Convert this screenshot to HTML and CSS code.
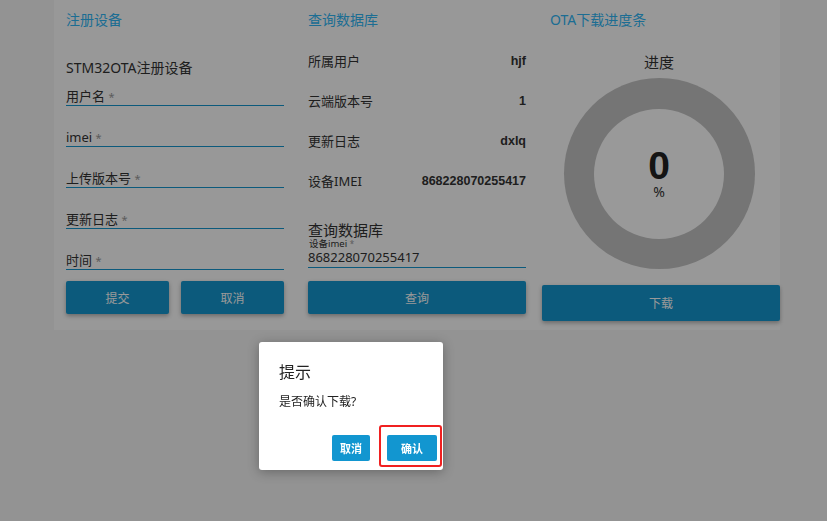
FILE: index.html
```html
<!DOCTYPE html>
<html lang="zh-CN">
<head>
    <meta charset="UTF-8">
    <meta name="viewport" content="width=device-width, initial-scale=1.0">
    <title>STM32 OTA</title>
    <link rel="stylesheet" href="styles.css">
</head>
<body>

    <div class="cards">

        <!-- 注册设备 -->
        <div class="card">
            <div class="card-title">注册设备</div>
            <div class="sub-title">STM32OTA注册设备</div>
            <div class="field"><label>用户名 <i>*</i></label></div>
            <div class="field"><label>imei <i>*</i></label></div>
            <div class="field"><label>上传版本号 <i>*</i></label></div>
            <div class="field"><label>更新日志 <i>*</i></label></div>
            <div class="field"><label>时间 <i>*</i></label></div>
            <div class="btn-row">
                <button class="btn">提交</button>
                <button class="btn">取消</button>
            </div>
        </div>

        <!-- 查询数据库 -->
        <div class="card">
            <div class="card-title">查询数据库</div>
            <div class="info-row"><span>所属用户</span><b>hjf</b></div>
            <div class="info-row"><span>云端版本号</span><b>1</b></div>
            <div class="info-row"><span>更新日志</span><b>dxlq</b></div>
            <div class="info-row"><span>设备IMEI</span><b>868228070255417</b></div>
            <div class="query-title">查询数据库</div>
            <div class="query-field">
                <div class="small-label">设备imei <i>*</i></div>
                <div class="query-value">868228070255417</div>
            </div>
            <button class="btn btn-full">查询</button>
        </div>

        <!-- OTA下载进度条 -->
        <div class="card">
            <div class="card-title">OTA下载进度条</div>
            <div class="progress-title">进度</div>
            <div class="donut">
                <div class="donut-inner">
                    <div class="percent">0</div>
                    <div class="percent-sign">%</div>
                </div>
            </div>
            <button class="btn btn-wide">下载</button>
        </div>

    </div>

    <div class="mask"></div>

    <div class="dialog">
        <div class="dialog-title">提示</div>
        <div class="dialog-msg">是否确认下载?</div>
        <div class="dialog-footer">
            <button class="dlg-btn">取消</button>
            <button class="dlg-btn dlg-ok">确认</button>
        </div>
        <div class="mark"></div>
    </div>

</body>
</html>
```

FILE: styles.css
```css
/* base */
body {
    margin: 0;
    background-color: #f6f6f6;
    font-family: "Noto Sans", "Noto Sans CJK SC", sans-serif;
    color: #333333;
    height: 521px;
    overflow: hidden;
}

.cards {
    display: flex;
    align-items: stretch;
    padding-left: 54px;
}

.card {
    width: 242px;
    box-sizing: border-box;
    padding: 10px 12px 9px 12px;
    background-color: #fdfdfd;
    display: flex;
    flex-direction: column;
}

.card-title {
    font-size: 14px;
    line-height: 20px;
    color: #2fb6f5;
}

.sub-title {
    margin-top: 31px;
    font-size: 14px;
    line-height: 14px;
    color: #333;
}

/* formulario */
.field {
    height: 31px;
    box-sizing: border-box;
    padding-top: 12px;
    border-bottom: 1px solid #1597cf;
    margin-bottom: 10px;
}

.field label {
    display: block;
    font-size: 13px;
    line-height: 18px;
}

i {
    font-style: normal;
    color: #999999;
    font-size: 11px;
}

.btn-row {
    display: flex;
    gap: 12px;
    margin-top: 1px;
}

.btn {
    flex: 1;
    height: 33px;
    border: none;
    border-radius: 2px;
    background-color: #1597cf;
    color: #ffffff;
    font-family: inherit;
    font-size: 12px;
    box-shadow: 0 2px 4px rgba(0, 0, 0, 0.3);
    padding: 0;
}

/* consulta */
.info-row {
    display: flex;
    justify-content: space-between;
    font-size: 13px;
    line-height: 18px;
    margin-top: 22px;
}

.info-row b {
    font-family: "Liberation Sans", Arial, sans-serif;
    font-size: 12.5px;
}

.query-title {
    margin-top: 32px;
    font-size: 15px;
    line-height: 16px;
}

.query-field {
    border-bottom: 1px solid #1597cf;
    padding-bottom: 2px;
}

.small-label {
    font-size: 9.5px;
    line-height: 11px;
    padding-left: 1px;
}

.small-label i {
    font-size: 8px;
}

.query-value {
    font-size: 13px;
    line-height: 16px;
}

.btn-full {
    flex: none;
    margin-top: 13px;
}

/* progresso */
.progress-title {
    margin-top: 22px;
    text-align: center;
    font-size: 15px;
    line-height: 20px;
}

.donut {
    margin: 6px auto 0 auto;
    width: 191px;
    height: 191px;
    border-radius: 50%;
    background-color: #c3c3c3;
    display: flex;
    align-items: center;
    justify-content: center;
}

.donut-inner {
    width: 130px;
    height: 130px;
    border-radius: 50%;
    background-color: #ffffff;
    display: flex;
    flex-direction: column;
    align-items: center;
    justify-content: center;
    padding-bottom: 2px;
    box-sizing: border-box;
}

.percent {
    font-family: "Liberation Sans", Arial, sans-serif;
    font-weight: bold;
    font-size: 39px;
    line-height: 38px;
    color: #222;
}

.percent-sign {
    font-size: 14px;
    line-height: 14px;
}

.btn-wide {
    flex: none;
    height: 36px;
    margin: 16px -12px 0 -8px;
}

/* modal */
.mask {
    position: fixed;
    left: 0;
    top: 0;
    right: 0;
    bottom: 0;
    background-color: rgba(0, 0, 0, 0.4);
}

.dialog {
    position: absolute;
    left: 259px;
    top: 342px;
    width: 184px;
    height: 128px;
    box-sizing: border-box;
    padding: 20px 6px 0 20px;
    background-color: #ffffff;
    border-radius: 3px;
    box-shadow: 0 2px 12px rgba(0, 0, 0, 0.3);
}

.dialog-title {
    font-size: 16px;
    line-height: 20px;
    color: #222;
}

.dialog-msg {
    margin-top: 11px;
    font-size: 12px;
    line-height: 18px;
    color: #222;
}

.dialog-footer {
    display: flex;
    justify-content: flex-end;
    gap: 17px;
    margin-top: 24px;
}

.dlg-btn {
    height: 26px;
    border: none;
    border-radius: 2px;
    background-color: #1296d0;
    color: #ffffff;
    font-family: inherit;
    font-size: 11px;
    font-weight: bold;
    padding: 0 8px;
}

.dlg-ok {
    padding: 0 14px;
}

/* destaque vermelho */
.mark {
    position: absolute;
    left: 120px;
    top: 83px;
    width: 63px;
    height: 42px;
    box-sizing: border-box;
    border: 2px solid #f02020;
    border-radius: 3px;
}
```
